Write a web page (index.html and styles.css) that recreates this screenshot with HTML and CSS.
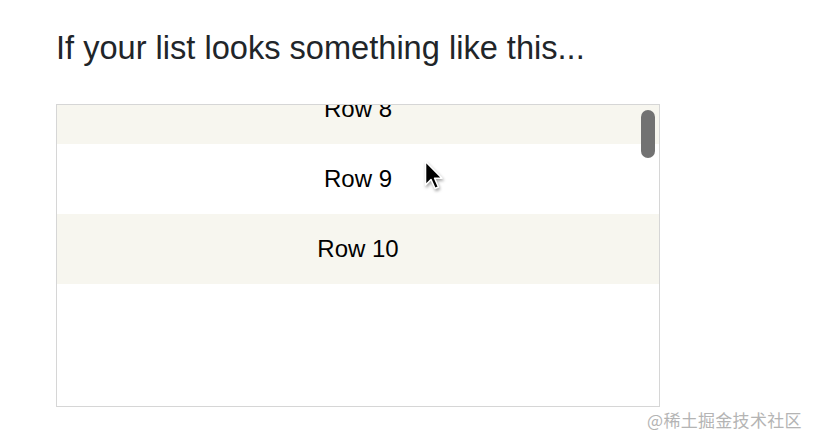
FILE: index.html
```html
<!DOCTYPE html>
<html>
<head>
<meta charset="utf-8">
<link rel="stylesheet" href="styles.css">
</head>
<body>
<main class="page">
  <p class="lead">If your list looks something like this...</p>
  <div class="list-frame">
    <div class="list-viewport">
      <div class="list">
        <div class="row odd">Row 8</div>
        <div class="row">Row 9</div>
        <div class="row odd">Row 10</div>
      </div>
    </div>
    <div class="thumb"></div>
    <svg class="cursor" width="20" height="32" viewBox="0 0 20 32">
      <path d="M1.5 1.5 L1.5 25 L7 19.5 L11 28.5 L14.5 27 L10.6 18.2 L18 18.2 Z" fill="#000" stroke="#fff" stroke-width="1.6" stroke-linejoin="round"/>
    </svg>
  </div>
  <div class="watermark">@稀土掘金技术社区</div>
</main>
</body>
</html>
```
FILE: styles.css
```css
html, body {
  margin: 0;
  padding: 0;
  background: #fff;
}
.page {
  position: relative;
  width: 816px;
  height: 446px;
  padding: 0 0 0 56px;
  box-sizing: border-box;
  font-family: "Liberation Sans", Arial, sans-serif;
}
.lead {
  margin: 0;
  padding-top: 28px;
  height: 104px;
  box-sizing: border-box;
  font-size: 32.6px;
  line-height: 40px;
  color: #212529;
}
.list-frame {
  position: relative;
  width: 604px;
  height: 303px;
  box-sizing: border-box;
  border: 1px solid #d6d6d6;
}
.list-viewport {
  height: 100%;
  overflow: hidden;
}
.list {
  margin-top: -31px;
}
.row {
  height: 70px;
  display: flex;
  align-items: center;
  justify-content: center;
  font-size: 24px;
  color: #000;
  background: #fff;
}
.row.odd {
  background: #f7f6ef;
}
.thumb {
  position: absolute;
  left: 584px;
  top: 5px;
  width: 14px;
  height: 48px;
  border-radius: 7px;
  background: #727272;
}
.cursor {
  position: absolute;
  left: 367px;
  top: 55px;
  filter: drop-shadow(1px 2px 1.5px rgba(0,0,0,0.35));
}
.watermark {
  position: absolute;
  left: 647px;
  top: 408px;
  font-family: "Noto Sans CJK SC", sans-serif;
  font-size: 17px;
  line-height: 24px;
  color: #b4b4b4;
  letter-spacing: 0.3px;
}
```
